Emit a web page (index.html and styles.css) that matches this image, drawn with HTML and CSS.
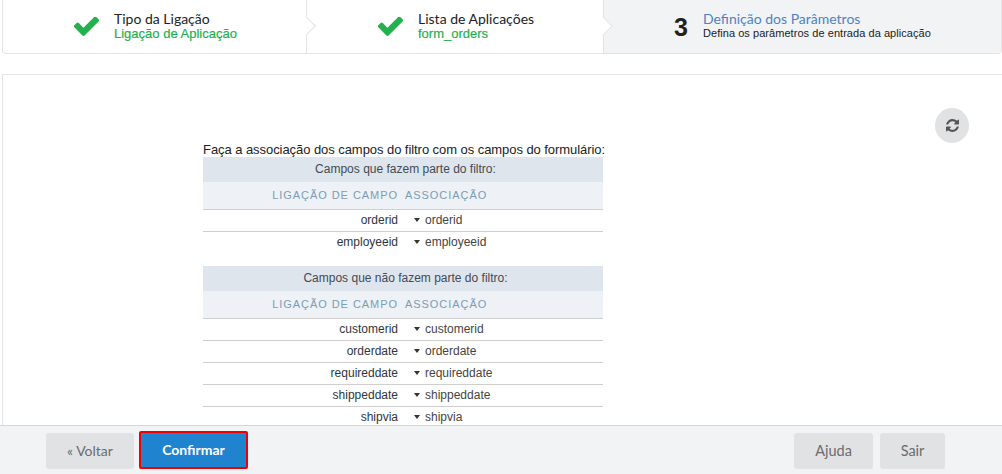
FILE: index.html
```html
<!DOCTYPE html>
<html lang="pt">
<head>
<meta charset="utf-8">
<title>Definição dos Parâmetros</title>
<link rel="stylesheet" href="styles.css">
</head>
<body>
<div class="page">
  <div class="wizard">
    <div class="step step-one">
      <svg class="check" viewBox="128 360 1543 1166" aria-hidden="true"><path d="M1671 566q0 40-28 68l-724 724-136 136q-28 28-68 28t-68-28l-136-136-362-362q-28-28-28-68t28-68l136-136q28-28 68-28t68 28l294 295 656-657q28-28 68-28t68 28l136 136q28 28 28 68z" fill="#22b14c"/></svg>
      <div class="step-text"><div class="step-title">Tipo da Ligação</div><div class="step-sub done">Ligação de Aplicação</div></div>
    </div>
    <div class="step step-two">
      <svg class="check" viewBox="128 360 1543 1166" aria-hidden="true"><path d="M1671 566q0 40-28 68l-724 724-136 136q-28 28-68 28t-68-28l-136-136-362-362q-28-28-28-68t28-68l136-136q28-28 68-28t68 28l294 295 656-657q28-28 68-28t68 28l136 136q28 28 28 68z" fill="#22b14c"/></svg>
      <div class="step-text"><div class="step-title">Lista de Aplicações</div><div class="step-sub done">form_orders</div></div>
    </div>
    <div class="step step-three">
      <span class="step-num">3</span>
      <div class="step-text"><div class="step-title current">Definição dos Parâmetros</div><div class="step-sub">Defina os parâmetros de entrada da aplicação</div></div>
    </div>
  </div>

  <div class="panel">
    <button class="refresh" type="button" aria-label="Atualizar">
      <svg viewBox="128 128 1536 1536" width="13" height="13" aria-hidden="true"><path d="M1639 1056q0 5-1 7-64 268-268 434.5t-478 166.5q-146 0-282.5-55t-243.5-157l-129 129q-19 19-45 19t-45-19-19-45v-448q0-26 19-45t45-19h448q26 0 45 19t19 45-19 45l-137 137q71 66 161 102t187 36q134 0 250-65t186-179q11-17 53-117 8-23 30-23h192q13 0 22.5 9.5t9.5 22.5zm25-800v448q0 26-19 45t-45 19h-448q-26 0-45-19t-19-45 19-45l138-138q-148-137-349-137-134 0-250 65t-186 179q-11 17-53 117-8 23-30 23h-199q-13 0-22.5-9.5t-9.5-22.5v-7q65-268 270-434.5t480-166.5q146 0 284 55.5t245 156.5l130-129q19-19 45-19t45 19 19 45z" fill="#555"/></svg>
    </button>
    <div class="content">
      <p class="intro">Faça a associação dos campos do filtro com os campos do formulário:</p>
      <table class="assoc">
        <tr><th class="cap" colspan="2">Campos que fazem parte do filtro:</th></tr>
        <tr class="head"><th class="left">Ligação de Campo</th><th class="right">Associação</th></tr>
        <tr class="row"><td class="left">orderid</td><td class="right"><span class="caret"></span>orderid</td></tr>
        <tr class="row"><td class="left">employeeid</td><td class="right"><span class="caret"></span>employeeid</td></tr>
      </table>
      <table class="assoc second">
        <tr><th class="cap" colspan="2">Campos que não fazem parte do filtro:</th></tr>
        <tr class="head"><th class="left">Ligação de Campo</th><th class="right">Associação</th></tr>
        <tr class="row"><td class="left">customerid</td><td class="right"><span class="caret"></span>customerid</td></tr>
        <tr class="row"><td class="left">orderdate</td><td class="right"><span class="caret"></span>orderdate</td></tr>
        <tr class="row"><td class="left">requireddate</td><td class="right"><span class="caret"></span>requireddate</td></tr>
        <tr class="row"><td class="left">shippeddate</td><td class="right"><span class="caret"></span>shippeddate</td></tr>
        <tr class="row"><td class="left">shipvia</td><td class="right"><span class="caret"></span>shipvia</td></tr>
      </table>
    </div>
  </div>

  <div class="footer">
    <div class="group">
      <button class="btn voltar" type="button">« Voltar</button>
      <button class="btn primary" type="button">Confirmar</button>
    </div>
    <div class="group">
      <button class="btn ajuda" type="button">Ajuda</button>
      <button class="btn sair" type="button">Sair</button>
    </div>
  </div>
</div>
</body>
</html>
```

FILE: styles.css
```css
* { box-sizing: border-box; }
html, body { margin: 0; padding: 0; background: #fff; }
.page { width: 1002px; height: 474px; display: flex; flex-direction: column; overflow: hidden; font-family: "Liberation Sans", Arial, sans-serif; }

.wizard { height: 54px; margin-left: 2px; display: flex; border: 1px solid #e2e3e5; border-top: 0; border-radius: 0 0 4px 4px; flex: none; }
.step { position: relative; display: flex; align-items: center; height: 53px; }
.step-one { width: 304px; padding-left: 71px; border-right: 1px solid #e2e3e5; }
.step-two { width: 297px; padding-left: 71px; border-right: 1px solid #e2e3e5; }
.step-three { flex: 1; padding-left: 70px; background: #f2f3f5; }
.step-one::after, .step-two::after { content: ""; position: absolute; right: -7px; top: 19px; width: 13px; height: 13px; background: #fff; border-top: 1px solid #e2e3e5; border-right: 1px solid #e2e3e5; transform: rotate(45deg); z-index: 1; }
.check { width: 25px; height: 19px; margin: -1px 15px 0 0; flex: none; }
.step-num { font: bold 25px/28px "Liberation Sans", Arial, sans-serif; color: #222; width: 29px; flex: none; }
.step-text { display: flex; flex-direction: column; margin-top: -2px; }
.step-title { font: 14px/15px Lato, sans-serif; color: #222; }
.step-title.current { color: #4f82c3; }
.step-sub { font: 11px/13px "Liberation Sans", Arial, sans-serif; color: #222; letter-spacing: .05px; margin-top: 1px; }
.step-sub.done { font: 13px/13px "Liberation Sans", Arial, sans-serif; color: #22b14c; letter-spacing: 0; -webkit-text-stroke: .2px #22b14c; }

.panel { position: relative; flex: 1; min-height: 0; margin: 20px 0 0 2px; border-top: 1px solid #e2e3e5; border-left: 1px solid #e2e3e5; overflow: hidden; }
.refresh { position: absolute; left: 932px; top: 33px; width: 34px; height: 35px; border: 0; border-radius: 50%; background: #e1e2e4; padding: 0; display: flex; align-items: center; justify-content: center; }
.content { width: 400px; margin: 68px 0 0 200px; }
.intro { margin: 0; font-size: 13px; letter-spacing: -.06px; line-height: 14px; color: #222; white-space: nowrap; }
.assoc { width: 400px; border-collapse: collapse; table-layout: fixed; }
.assoc.second { margin-top: 13px; }
.cap { height: 25px; padding: 0 0 2px 5px; background: #dfe5ed; font: 12px/14px "Liberation Sans", Arial, sans-serif; color: #414a55; text-align: center; }
.head th { height: 27px; padding: 0; background: #eef1f5; font: 11px/14px "Liberation Sans", Arial, sans-serif; letter-spacing: .95px; text-transform: uppercase; color: #7b9db5; border-bottom: 1px solid #cfcfcf; }
.head .left { text-align: right; padding-right: 5px; }
.head .right { text-align: left; padding-left: 2px; }
.left { width: 200px; }
.row td { height: 22px; padding: 0; font-size: 12px; line-height: 14px; border-bottom: 1px solid #cfcfcf; }
.row:last-child td { border-bottom: 0; }
.row .left { text-align: right; color: #2d3540; padding-right: 5px; }
.row .right { text-align: left; color: #444; padding-left: 16px; }
.caret { display: inline-block; width: 0; height: 0; border-left: 3.5px solid transparent; border-right: 3.5px solid transparent; border-top: 4px solid #333; margin-right: 5px; vertical-align: 2px; margin-left: -5px; }

.footer { height: 49px; flex: none; background: #f2f3f5; border-top: 1px solid #d5d6d8; display: flex; justify-content: space-between; align-items: flex-end; padding: 0 57px 5px 46px; }
.group { display: flex; align-items: flex-end; gap: 5px; }
.btn { height: 36px; border: 0; border-radius: 3px; background: #e1e2e4; color: #6b6c6e; font: 14.5px/18px Lato, sans-serif; padding: 0; }
.voltar { width: 88px; font-size: 14px; }
.primary { width: 109px; height: 38px; border: 2px solid #f00000; border-radius: 2px; background: #2083d0; color: #fff; font-size: 14px; font-weight: 700; }
.ajuda { width: 79px; margin-right: 2px; }
.sair { width: 65px; }
```
